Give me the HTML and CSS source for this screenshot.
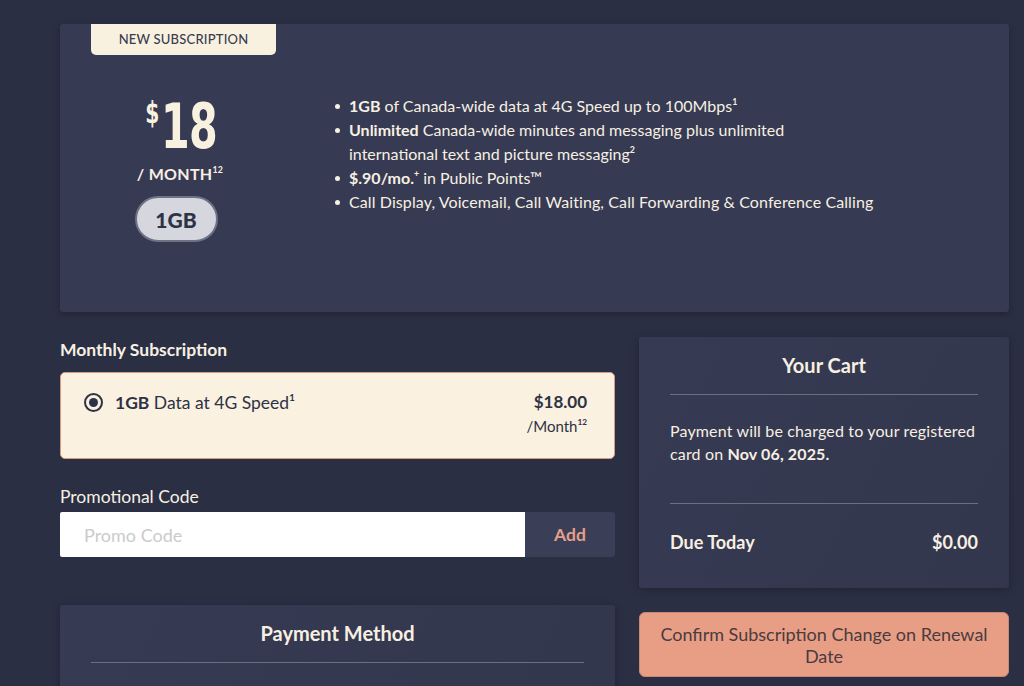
FILE: index.html
```html
<!DOCTYPE html>
<html lang="en">
<head>
<meta charset="utf-8">
<title>Subscription</title>
<link rel="stylesheet" href="styles.css">
</head>
<body>
<div class="page">
  <section class="plan-card">
    <div class="tag">NEW SUBSCRIPTION</div>
    <div class="plan-body">
      <div class="price-block">
        <div class="price"><span class="cur">$</span><span class="amt">18</span></div>
        <div class="per">/ MONTH<sup>12</sup></div>
        <div class="pill">1GB</div>
      </div>
      <ul class="features">
        <li><b>1GB</b> of Canada-wide data at 4G Speed up to 100Mbps<sup>1</sup></li>
        <li><b>Unlimited</b> Canada-wide minutes and messaging plus unlimited international text and picture messaging<sup>2</sup></li>
        <li><b>$.90/mo.</b><sup>+</sup> in Public Points™</li>
        <li>Call Display, Voicemail, Call Waiting, Call Forwarding &amp; Conference Calling</li>
      </ul>
    </div>
  </section>

  <div class="lower">
    <div class="left-col">
      <h3 class="label bold">Monthly Subscription</h3>
      <div class="option">
        <div class="opt-left">
          <span class="radio"><span class="dot"></span></span>
          <span class="opt-text"><b>1GB</b> Data at 4G Speed<sup>1</sup></span>
        </div>
        <div class="opt-right">
          <div class="opt-price">$18.00</div>
          <div class="opt-per">/Month<sup>12</sup></div>
        </div>
      </div>
      <h3 class="label promo-label">Promotional Code</h3>
      <div class="promo">
        <input class="promo-input" type="text" placeholder="Promo Code">
        <button class="promo-btn">Add</button>
      </div>
      <section class="card pay-card">
        <h2 class="card-title">Payment Method</h2>
        <hr class="divider">
      </section>
    </div>
    <div class="right-col">
      <section class="card cart">
        <h2 class="card-title">Your Cart</h2>
        <hr class="divider">
        <p class="cart-text">Payment will be charged to your registered card on <b>Nov 06, 2025.</b></p>
        <hr class="divider second">
        <div class="due"><span>Due Today</span><span>$0.00</span></div>
      </section>
      <button class="confirm">Confirm Subscription Change on Renewal Date</button>
    </div>
  </div>
</div>
</body>
</html>
```

FILE: styles.css
```css
* { box-sizing: border-box; }
html, body { margin: 0; padding: 0; }
body {
  background: #2b2f44;
  font-family: "Lato", "Open Sans", sans-serif;
  color: #f7f0e2;
  width: 1024px;
  height: 686px;
  overflow: hidden;
}
.page {
  padding: 24px 15px 0 60px;
}
sup {
  font-size: 0.55em;
  line-height: 0;
  vertical-align: baseline;
  position: relative;
  top: -0.8em;
  font-weight: 700;
}
.plan-card {
  background: #363a52;
  border-radius: 3px;
  height: 288px;
  width: 949px;
  padding: 0 31px;
  box-shadow: 0 2px 6px rgba(0,0,0,0.25);
}
.tag {
  display: inline-block;
  background: #f9f1df;
  color: #3a3d50;
  font-size: 13px;
  font-weight: 500;
  letter-spacing: 0.2px;
  width: 185px;
  height: 31px;
  line-height: 31px;
  text-align: center;
  border-radius: 0 0 5px 5px;
}
.plan-body {
  display: flex;
  margin-top: 41px;
}
.price-block {
  width: 170px;
  display: flex;
  flex-direction: column;
  align-items: center;
}
.price {
  display: flex;
  align-items: flex-start;
  height: 56px;
  color: #f9f1df;
  font-family: "DejaVu Sans Condensed", "DejaVu Sans", sans-serif;
  font-weight: 700;
  margin-left: 6px;
}
.cur {
  font-size: 30px;
  line-height: 1;
  margin-top: 2px;
  transform: scaleX(0.75);
  display: inline-block;
  width: 18px;
}
.amt {
  font-size: 62px;
  line-height: 1;
  display: inline-block;
  transform: scaleX(0.74);
  transform-origin: left center;
  width: 54px;
  letter-spacing: -1px;
}
.per {
  margin-top: 12px;
  margin-left: 8px;
  font-size: 16px;
  font-weight: 700;
  letter-spacing: 0.3px;
  line-height: 20px;
}
.pill {
  margin-top: 12px;
  width: 83px;
  height: 46px;
  border-radius: 23px;
  background: #d5d6de;
  border: 2px solid #6e7284;
  color: #2e3245;
  font-weight: 900;
  font-size: 21px;
  display: flex;
  align-items: center;
  justify-content: center;
}
.features {
  margin: -2px 0 0 72px;
  padding: 0;
  list-style: none;
  font-size: 16px;
  line-height: 24px;
  width: 480px;
}
.features li {
  position: relative;
  padding-left: 16px;
}
.features li::before {
  content: "";
  position: absolute;
  left: 2px;
  top: 10px;
  width: 5px;
  height: 5px;
  border-radius: 50%;
  background: #f7f0e2;
}
.features li:last-child { white-space: nowrap; letter-spacing: 0.1px; }
.features b { font-weight: 700; }
.lower {
  display: flex;
  gap: 24px;
  margin-top: 25px;
}
.left-col { width: 555px; }
.right-col { width: 370px; }
.label {
  margin: 0;
  font-size: 17.5px;
  font-weight: 400;
  line-height: 24px;
}
.label.bold { font-weight: 700; font-size: 17.5px; margin-top: 1px; }
.option {
  margin-top: 10px;
  height: 87px;
  background: #faf1e0;
  border: 1px solid #d99a85;
  border-radius: 5px;
  display: flex;
  justify-content: space-between;
  padding: 17px 27px 0 23px;
  color: #2e3245;
}
.opt-left {
  display: flex;
  align-items: center;
  height: 24px;
  font-size: 17.5px;
}
.radio {
  width: 19px;
  height: 19px;
  border: 2px solid #2e3245;
  border-radius: 50%;
  display: flex;
  align-items: center;
  justify-content: center;
  margin-right: 12px;
}
.dot {
  width: 9px;
  height: 9px;
  background: #2e3245;
  border-radius: 50%;
}
.opt-right { text-align: right; }
.opt-price {
  font-size: 17px;
  font-weight: 700;
  line-height: 24px;
}
.opt-per {
  font-size: 15px;
  line-height: 24px;
}
.promo-label {
  margin-top: 26px;
}
.promo {
  display: flex;
  margin-top: 3px;
  height: 45px;
}
.promo-input {
  width: 465px;
  border: none;
  background: #fff;
  font-family: inherit;
  font-size: 18px;
  padding: 0 24px;
  border-radius: 2px 0 0 2px;
  outline: none;
}
.promo-input::placeholder { color: #cbcbcb; }
.promo-btn {
  width: 90px;
  border: none;
  background: #3a3e56;
  color: #e3a08a;
  font-family: inherit;
  font-size: 17.5px;
  font-weight: 700;
  border-radius: 0 3px 3px 0;
}
.card {
  background: linear-gradient(120deg, #363a52, #33374e);
  border-radius: 3px;
  box-shadow: 0 2px 8px rgba(0,0,0,0.25);
  padding: 0 31px;
}
.card-title {
  margin: 0;
  text-align: center;
  font-size: 20px;
  font-weight: 700;
  line-height: 24px;
}
.divider {
  border: none;
  height: 1px;
  background: #6b6f84;
  margin: 0;
}
.pay-card {
  margin-top: 48px;
  padding-top: 16px;
  height: 100px;
}
.pay-card .divider { margin-top: 17px; }
.cart {
  margin-top: 0;
  height: 251px;
  padding-top: 16px;
}
.cart .divider { margin-top: 17px; }
.cart-text {
  margin: 24px 0 0;
  font-size: 16px;
  letter-spacing: 0.15px;
  line-height: 23px;
}
.cart-text b { font-weight: 700; }
.cart .divider.second { margin-top: 38px; }
.due {
  display: flex;
  justify-content: space-between;
  margin-top: 26px;
  font-size: 18px;
  font-weight: 700;
  line-height: 24px;
}
.confirm {
  margin-top: 24px;
  width: 370px;
  height: 65px;
  background: #e89e85;
  border: 1px solid #c98873;
  border-radius: 6px;
  color: #4a3b40;
  font-family: inherit;
  font-size: 18px;
  line-height: 22px;
  padding: 0 14px;
}
```
